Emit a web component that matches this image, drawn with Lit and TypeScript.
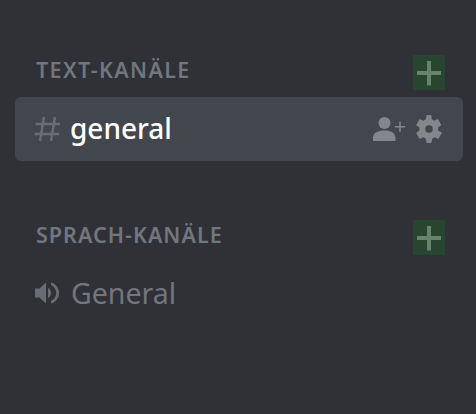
import { LitElement, html, css, svg } from "lit";
import { customElement } from "lit/decorators.js";

const plus = svg`<svg class="plus" viewBox="0 0 32 35" width="32" height="35"><path d="M14 6h4v10h10v4H18v10.500h-4V20H4v-4h10z" fill="#67836d"/></svg>`;

@customElement("app-root")
export class AppRoot extends LitElement {
  static styles = css`
    :host { display: block; width: 476px; height: 414px; background: #2f3136; overflow: hidden; font-family: "Noto Sans", "Open Sans", sans-serif; }
    .list { display: flex; flex-direction: column; padding: 55px 13px 0 15px; }
    .head { display: flex; align-items: center; justify-content: space-between; height: 35px; padding: 0 18px 0 21px; margin-bottom: 7px; }
    .title { font-size: 21.500px; font-weight: 600; color: #72767d; line-height: 32px; padding-bottom: 5px; }
    .title.text { letter-spacing: 1.350px; }
    .title.voice { letter-spacing: 1.030px; }
    .plus { display: block; background: #27452f; }
    .row { display: flex; align-items: center; height: 64px; border-radius: 6px; padding: 0 0 0 19px; }
    .row.active { background: #42464d; padding-right: 20px; margin-bottom: 59px; }
    .hash { display: block; margin-right: 10px; }
    .name { font-size: 28.500px; line-height: 38px; color: #72767d; font-weight: 400; padding-bottom: 3px; }
    .active .name { color: #fff; font-weight: 500; flex: 1; font-size: 28px; padding-bottom: 2px; }
    .icons { display: flex; align-items: center; gap: 9px; }
    .icons svg { display: block; }
    .spk { display: block; margin: 0 11px 3px 1px; }
  `;

  render() {
    return html`<div class="list">
      <div class="head"><span class="title text">TEXT-KANÄLE</span>${plus}</div>
      <div class="row active">
        <svg class="hash" width="26" height="26" viewBox="0 0 26 26" fill="none" stroke="#686c73" stroke-width="2.500">
          <path d="M10 1 6 25M21 1l-4 24M1.500 8H26M0.500 18H25"/>
        </svg>
        <span class="name">general</span>
        <div class="icons">
          <svg width="34" height="26" viewBox="0 0 34 26">
            <circle cx="12.500" cy="7" r="6" fill="#83878c"/>
            <path d="M1 25v-3.500C1 17 6 14.500 12.500 14.500S23 17 23.500 21.500V25z" fill="#83878c"/>
            <path d="M28 5.700v10M23 10.700h10" stroke="#83878c" stroke-width="1.600" fill="none"/>
          </svg>
          <svg width="28" height="28" viewBox="0 0 24 24">
            <path fill="#83878c" fill-rule="evenodd" d="M19.700 13.200c.1-.4.100-.8.100-1.200s0-.8-.1-1.200l2.500-1.900c.2-.2.300-.5.100-.8l-2.400-4.100c-.1-.3-.4-.4-.7-.3l-3 1.200c-.6-.5-1.300-.9-2-1.200L14.200.6c0-.3-.3-.5-.6-.5h-3.200c-.3 0-.6.200-.6.500l-.5 3.100c-.7.300-1.400.7-2 1.200l-3-1.200c-.3-.1-.6 0-.7.300L1.200 8.100c-.2.300-.1.600.1.800l2.500 1.900c-.1.400-.1.800-.1 1.200s0 .8.100 1.200l-2.500 1.900c-.2.200-.3.500-.1.800l2.400 4.100c.1.300.4.400.7.300l3-1.200c.6.500 1.300.9 2 1.200l.5 3.100c0 .3.300.5.600.5h3.200c.3 0 .6-.2.600-.5l.5-3.100c.7-.3 1.400-.7 2-1.200l3 1.200c.3.100.6 0 .7-.3l2.400-4.100c.2-.3.100-.6-.1-.8zM12 15.200a3.200 3.200 0 1 1 0-6.400 3.200 3.200 0 0 1 0 6.400z"/>
          </svg>
        </div>
      </div>
      <div class="head"><span class="title voice">SPRACH-KANÄLE</span>${plus}</div>
      <div class="row">
        <svg class="spk" width="25" height="22" viewBox="0 0 25 22" fill="#686c73">
          <path d="M0 6.500h4.500L11 0.500v21l-6.500-6H0z"/>
          <path d="M13 6c1.800 .9 3 2.800 3 5s-1.200 4.100-3 5z"/>
          <path d="M16 0.500c4.800 1.300 8 5.300 8 10.500s-3.200 9.200-8 10.500v-2.800c3-1.200 5.200-4.200 5.200-7.700S19 4.500 16 3.300z"/>
        </svg>
        <span class="name">General</span>
      </div>
    </div>`;
  }
}
